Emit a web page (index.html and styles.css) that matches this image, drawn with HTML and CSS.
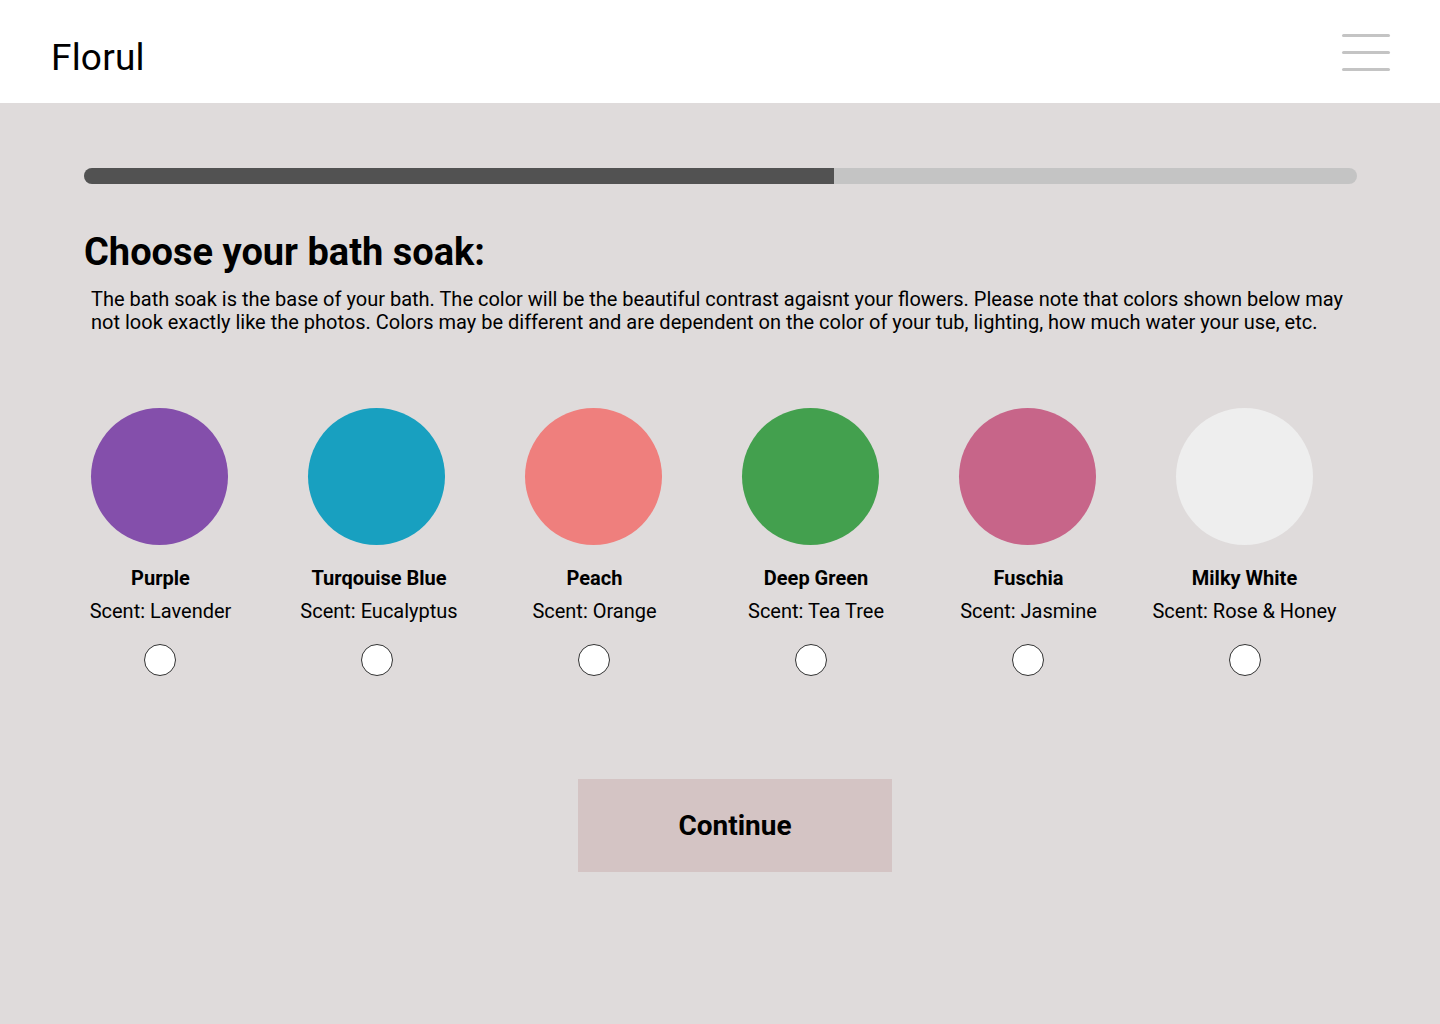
FILE: index.html
```html
<!DOCTYPE html>
<html>
<head>
<meta charset="utf-8">
<link rel="stylesheet" href="styles.css">
</head>
<body>
<header class="topbar">
  <div class="logo">Florul</div>
  <button class="menu" aria-label="Menu"><span></span><span></span><span></span></button>
</header>
<main class="content">
  <div class="progress"><div class="progress-fill" style="width:58.92%"></div></div>
  <h1 class="title">Choose your bath soak:</h1>
  <p class="desc">The bath soak is the base of your bath. The color will be the beautiful contrast agaisnt your flowers. Please note that colors shown below may not look exactly like the photos. Colors may be different and are dependent on the color of your tub, lighting, how much water your use, etc.</p>
  <div class="options">
    <label class="option"><span class="swatch purple"></span><span class="text nudge-1"><span class="name">Purple</span><span class="scent">Scent: Lavender</span></span><span class="radio"></span></label>
    <label class="option"><span class="swatch turq"></span><span class="text nudge-3"><span class="name">Turqouise Blue</span><span class="scent">Scent: Eucalyptus</span></span><span class="radio"></span></label>
    <label class="option"><span class="swatch peach"></span><span class="text nudge-1"><span class="name">Peach</span><span class="scent">Scent: Orange</span></span><span class="radio"></span></label>
    <label class="option"><span class="swatch green"></span><span class="text nudge-6"><span class="name">Deep Green</span><span class="scent">Scent: Tea Tree</span></span><span class="radio"></span></label>
    <label class="option"><span class="swatch fuschia"></span><span class="text nudge-1"><span class="name">Fuschia</span><span class="scent">Scent: Jasmine</span></span><span class="radio"></span></label>
    <label class="option"><span class="swatch milky"></span><span class="text"><span class="name">Milky White</span><span class="scent">Scent: Rose &amp; Honey</span></span><span class="radio"></span></label>
  </div>
  <div class="actions"><button class="continue">Continue</button></div>
</main>
</body>
</html>
```
FILE: styles.css
```css
* { box-sizing: border-box; }
html, body { margin: 0; padding: 0; }
body {
  font-family: Roboto, "Liberation Sans", Arial, sans-serif;
  background: #dfdbdb;
  color: #000;
  width: 1440px;
  min-height: 1024px;
}
.topbar {
  height: 103px;
  background: #fff;
  display: flex;
  align-items: center;
  justify-content: space-between;
  padding: 0 50px 0 51px;
}
.logo {
  font-size: 37px;
  line-height: 1;
  margin-top: 11px;
  letter-spacing: 0.2px;
}
.menu {
  background: none;
  border: 0;
  padding: 0;
  width: 48px;
  display: flex;
  flex-direction: column;
  gap: 14px;
  margin-top: 2px;
}
.menu span {
  display: block;
  height: 3px;
  border-radius: 2px;
  background: #c4c4c4;
}
.content {
  padding: 65px 83px 0 84px;
}
.progress {
  height: 16px;
  background: #c4c4c4;
  border-radius: 8px;
  overflow: hidden;
}
.progress-fill {
  height: 100%;
  background: #525252;
}
.title {
  margin: 45px 0 0;
  font-size: 38px;
  font-weight: 700;
  line-height: 46px;
  letter-spacing: 0;
}
.desc {
  margin: 13px 0 0 7px;
  font-size: 20px;
  line-height: 23px;
  width: 1262px;
}
.options {
  display: grid;
  grid-template-columns: repeat(6, 137px);
  column-gap: 80px;
  margin: 74px 0 0 7px;
}
.option {
  display: flex;
  flex-direction: column;
  align-items: center;
  white-space: nowrap;
}
.swatch {
  width: 137px;
  height: 137px;
  border-radius: 50%;
}
.purple { background: #844fab; }
.turq { background: #18a0c0; }
.peach { background: #ef7f7d; }
.green { background: #43a04e; }
.fuschia { background: #c76589; }
.milky { background: #eeeeee; }
.text {
  display: flex;
  flex-direction: column;
  align-items: center;
}
.nudge-1 { margin-left: 2px; }
.nudge-3 { margin-left: 5px; }
.nudge-6 { margin-left: 11px; }
.name {
  font-size: 20px;
  font-weight: 700;
  line-height: 24px;
  margin-top: 21px;
}
.scent {
  font-size: 20px;
  line-height: 24px;
  margin-top: 9px;
}
.radio {
  width: 32px;
  height: 32px;
  border-radius: 50%;
  background: #fff;
  border: 1px solid #333;
  margin-top: 21px;
}
.actions {
  display: flex;
  justify-content: center;
  margin-top: 103px;
  padding-left: 29px;
}
.continue {
  width: 314px;
  height: 93px;
  background: #d4c4c4;
  border: 0;
  font-family: inherit;
  font-size: 28px;
  font-weight: 700;
  color: #000;
  padding: 0;
}
```
